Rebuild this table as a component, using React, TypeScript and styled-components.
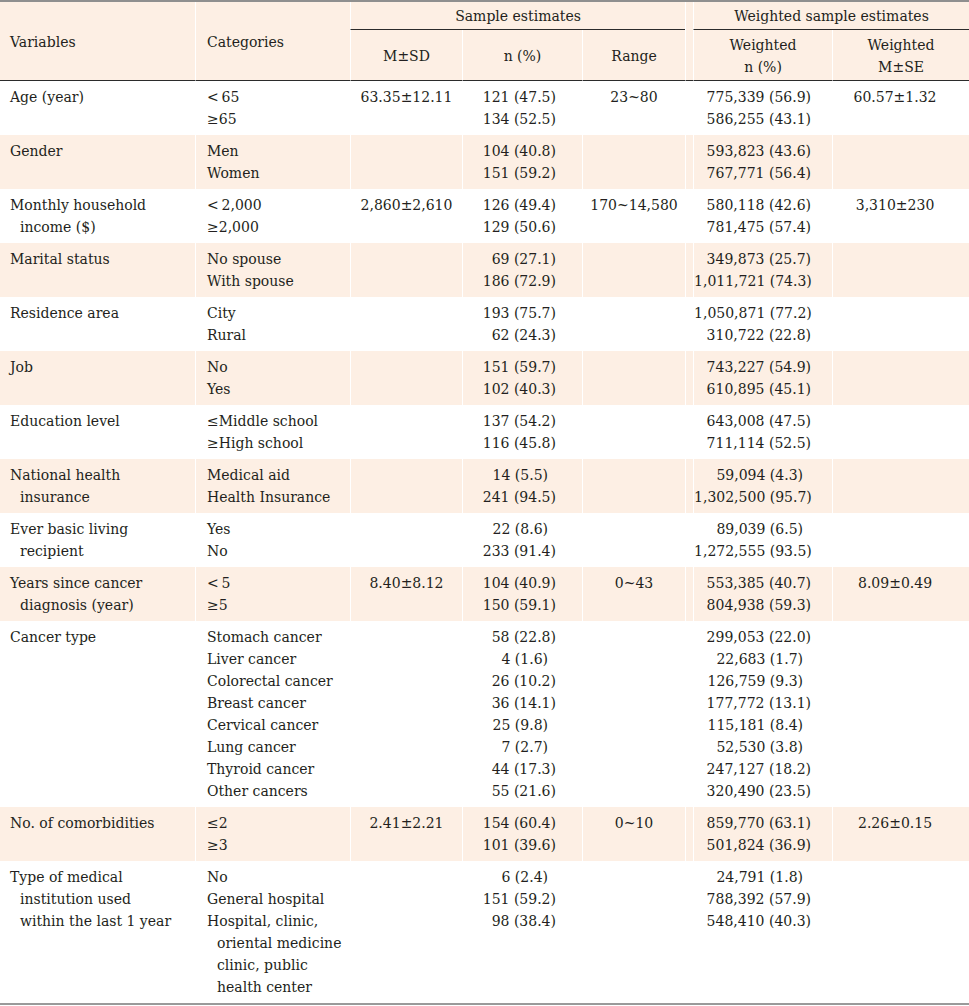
import React from "react";
import styled, { createGlobalStyle } from "styled-components";

const GlobalStyle = createGlobalStyle`
  html, body { margin: 0; padding: 0; background: #ffffff; }
  body {
    font-family: "DejaVu Serif", "Liberation Serif", serif;
    font-size: 14px;
    color: #231f20;
  }
`;

const SHADE = "#fdefe4";

const Table = styled.table`
  width: 969px;
  table-layout: fixed;
  border-collapse: separate;
  border-spacing: 0;
  border-top: 2px solid #8f8f8f;
  border-bottom: 2px solid #9a9a9a;
  line-height: 22px;
`;

const Th = styled.th<{ $align?: "left" | "center"; $pl?: number; $first?: boolean; $under?: boolean; $bottom?: boolean; $row2?: boolean }>`
  background: ${SHADE};
  font-weight: normal;
  white-space: nowrap;
  text-align: ${(p) => p.$align ?? "center"};
  vertical-align: middle;
  padding: ${(p) => (p.$row2 ? "4px 0 2px" : "3px 0 2px")};
  padding-left: ${(p) => p.$pl ?? 0}px;
  border-left: ${(p) => (p.$first ? "none" : "1px solid #ffffff")};
  border-bottom: ${(p) => (p.$under || p.$bottom ? "1px solid #2b2b2b" : "none")};
`;

const UnderWrap = styled.div`
  border-bottom: 1px solid #2b2b2b;
`;

const Tr = styled.tr<{ $shaded?: boolean }>`
  background: ${(p) => (p.$shaded ? SHADE : "#ffffff")};
`;

const Td = styled.td<{ $first?: boolean }>`
  vertical-align: top;
  padding: 5px 0;
  white-space: nowrap;
  border-left: ${(p) => (p.$first ? "none" : "1px solid #ffffff")};
`;

const VarCell = styled(Td)`
  padding-left: 20px;
  text-indent: -10px;
`;

const CatCell = styled(Td)`
  padding-left: 11px;
`;

const CatEntry = styled.div`
  padding-left: 10px;
  text-indent: -10px;
`;

const CenterCell = styled(Td)<{ $pr?: number }>`
  text-align: center;
  padding-right: ${(p) => p.$pr ?? 0}px;
`;

const NumCell = styled(Td)<{ $pr: number }>`
  text-align: right;
  padding-right: ${(p) => p.$pr}px;
`;

const NumLine = styled.div``;

const Pad = styled.span`
  display: inline-block;
  width: 8px;
`;

type Row = {
  v: string[];
  cats: string[][];
  msd?: string;
  n: string[];
  range?: string;
  wn: string[];
  wm?: string;
};

const rows: Row[] = [
  { v: ["Age (year)"], cats: [["<\u200965"], ["\u226565"]], msd: "63.35\u00b112.11", n: ["121 (47.5)", "134 (52.5)"], range: "23~80", wn: ["775,339 (56.9)", "586,255 (43.1)"], wm: "60.57\u00b11.32" },
  { v: ["Gender"], cats: [["Men"], ["Women"]], n: ["104 (40.8)", "151 (59.2)"], wn: ["593,823 (43.6)", "767,771 (56.4)"] },
  { v: ["Monthly household", "income ($)"], cats: [["<\u20092,000"], ["\u22652,000"]], msd: "2,860\u00b12,610", n: ["126 (49.4)", "129 (50.6)"], range: "170~14,580", wn: ["580,118 (42.6)", "781,475 (57.4)"], wm: "3,310\u00b1230" },
  { v: ["Marital status"], cats: [["No spouse"], ["With spouse"]], n: ["69 (27.1)", "186 (72.9)"], wn: ["349,873 (25.7)", "1,011,721 (74.3)"] },
  { v: ["Residence area"], cats: [["City"], ["Rural"]], n: ["193 (75.7)", "62 (24.3)"], wn: ["1,050,871 (77.2)", "310,722 (22.8)"] },
  { v: ["Job"], cats: [["No"], ["Yes"]], n: ["151 (59.7)", "102 (40.3)"], wn: ["743,227 (54.9)", "610,895 (45.1)"] },
  { v: ["Education level"], cats: [["\u2264Middle school"], ["\u2265High school"]], n: ["137 (54.2)", "116 (45.8)"], wn: ["643,008 (47.5)", "711,114 (52.5)"] },
  { v: ["National health", "insurance"], cats: [["Medical aid"], ["Health Insurance"]], n: ["14 (5.5)", "241 (94.5)"], wn: ["59,094 (4.3)", "1,302,500 (95.7)"] },
  { v: ["Ever basic living", "recipient"], cats: [["Yes"], ["No"]], n: ["22 (8.6)", "233 (91.4)"], wn: ["89,039 (6.5)", "1,272,555 (93.5)"] },
  { v: ["Years since cancer", "diagnosis (year)"], cats: [["<\u20095"], ["\u22655"]], msd: "8.40\u00b18.12", n: ["104 (40.9)", "150 (59.1)"], range: "0~43", wn: ["553,385 (40.7)", "804,938 (59.3)"], wm: "8.09\u00b10.49" },
  {
    v: ["Cancer type"],
    cats: [["Stomach cancer"], ["Liver cancer"], ["Colorectal cancer"], ["Breast cancer"], ["Cervical cancer"], ["Lung cancer"], ["Thyroid cancer"], ["Other cancers"]],
    n: ["58 (22.8)", "4 (1.6)", "26 (10.2)", "36 (14.1)", "25 (9.8)", "7 (2.7)", "44 (17.3)", "55 (21.6)"],
    wn: ["299,053 (22.0)", "22,683 (1.7)", "126,759 (9.3)", "177,772 (13.1)", "115,181 (8.4)", "52,530 (3.8)", "247,127 (18.2)", "320,490 (23.5)"],
  },
  { v: ["No. of comorbidities"], cats: [["\u22642"], ["\u22653"]], msd: "2.41\u00b12.21", n: ["154 (60.4)", "101 (39.6)"], range: "0~10", wn: ["859,770 (63.1)", "501,824 (36.9)"], wm: "2.26\u00b10.15" },
  {
    v: ["Type of medical", "institution used", "within the last 1 year"],
    cats: [["No"], ["General hospital"], ["Hospital, clinic,", "oriental medicine", "clinic, public", "health center"]],
    n: ["6 (2.4)", "151 (59.2)", "98 (38.4)"],
    wn: ["24,791 (1.8)", "788,392 (57.9)", "548,410 (40.3)"],
  },
];

const withBreaks = (lines: string[]) =>
  lines.map((l, i) => (
    <React.Fragment key={i}>
      {i > 0 && <br />}
      {l}
    </React.Fragment>
  ));

const Num = ({ s }: { s: string }) => (
  <NumLine>
    {s}
    {/\(\d\./.test(s) && <Pad />}
  </NumLine>
);

export default function App() {
  return (
    <>
      <GlobalStyle />
      <Table>
        <colgroup>
          <col style={{ width: 195 }} />
          <col style={{ width: 155 }} />
          <col style={{ width: 112 }} />
          <col style={{ width: 120 }} />
          <col style={{ width: 103 }} />
          <col style={{ width: 8 }} />
          <col style={{ width: 139 }} />
          <col style={{ width: 137 }} />
        </colgroup>
        <thead>
          <tr>
            <Th rowSpan={2} $first $align="left" $pl={10} $bottom>Variables</Th>
            <Th rowSpan={2} $align="left" $pl={11} $bottom>Categories</Th>
            <Th colSpan={3} $under>Sample estimates</Th>
            <Th rowSpan={2} $bottom />
            <Th colSpan={2} $under>Weighted sample estimates</Th>
          </tr>
          <tr>
            <Th $row2 $bottom>M±SD</Th>
            <Th $row2 $bottom>n (%)</Th>
            <Th $row2 $bottom>Range</Th>
            <Th $row2 $bottom>Weighted<br />n (%)</Th>
            <Th $row2 $bottom>Weighted<br />M±SE</Th>
          </tr>
        </thead>
        <tbody>
          {rows.map((r, i) => (
            <Tr key={i} $shaded={i % 2 === 1}>
              <VarCell $first>{withBreaks(r.v)}</VarCell>
              <CatCell>
                {r.cats.map((c, j) => (
                  <CatEntry key={j}>{withBreaks(c)}</CatEntry>
                ))}
              </CatCell>
              <CenterCell>{r.msd}</CenterCell>
              <NumCell $pr={26}>
                {r.n.map((s, j) => (
                  <Num key={j} s={s} />
                ))}
              </NumCell>
              <CenterCell>{r.range}</CenterCell>
              <Td />
              <NumCell $pr={21}>
                {r.wn.map((s, j) => (
                  <Num key={j} s={s} />
                ))}
              </NumCell>
              <CenterCell $pr={12}>{r.wm}</CenterCell>
            </Tr>
          ))}
        </tbody>
      </Table>
    </>
  );
}
